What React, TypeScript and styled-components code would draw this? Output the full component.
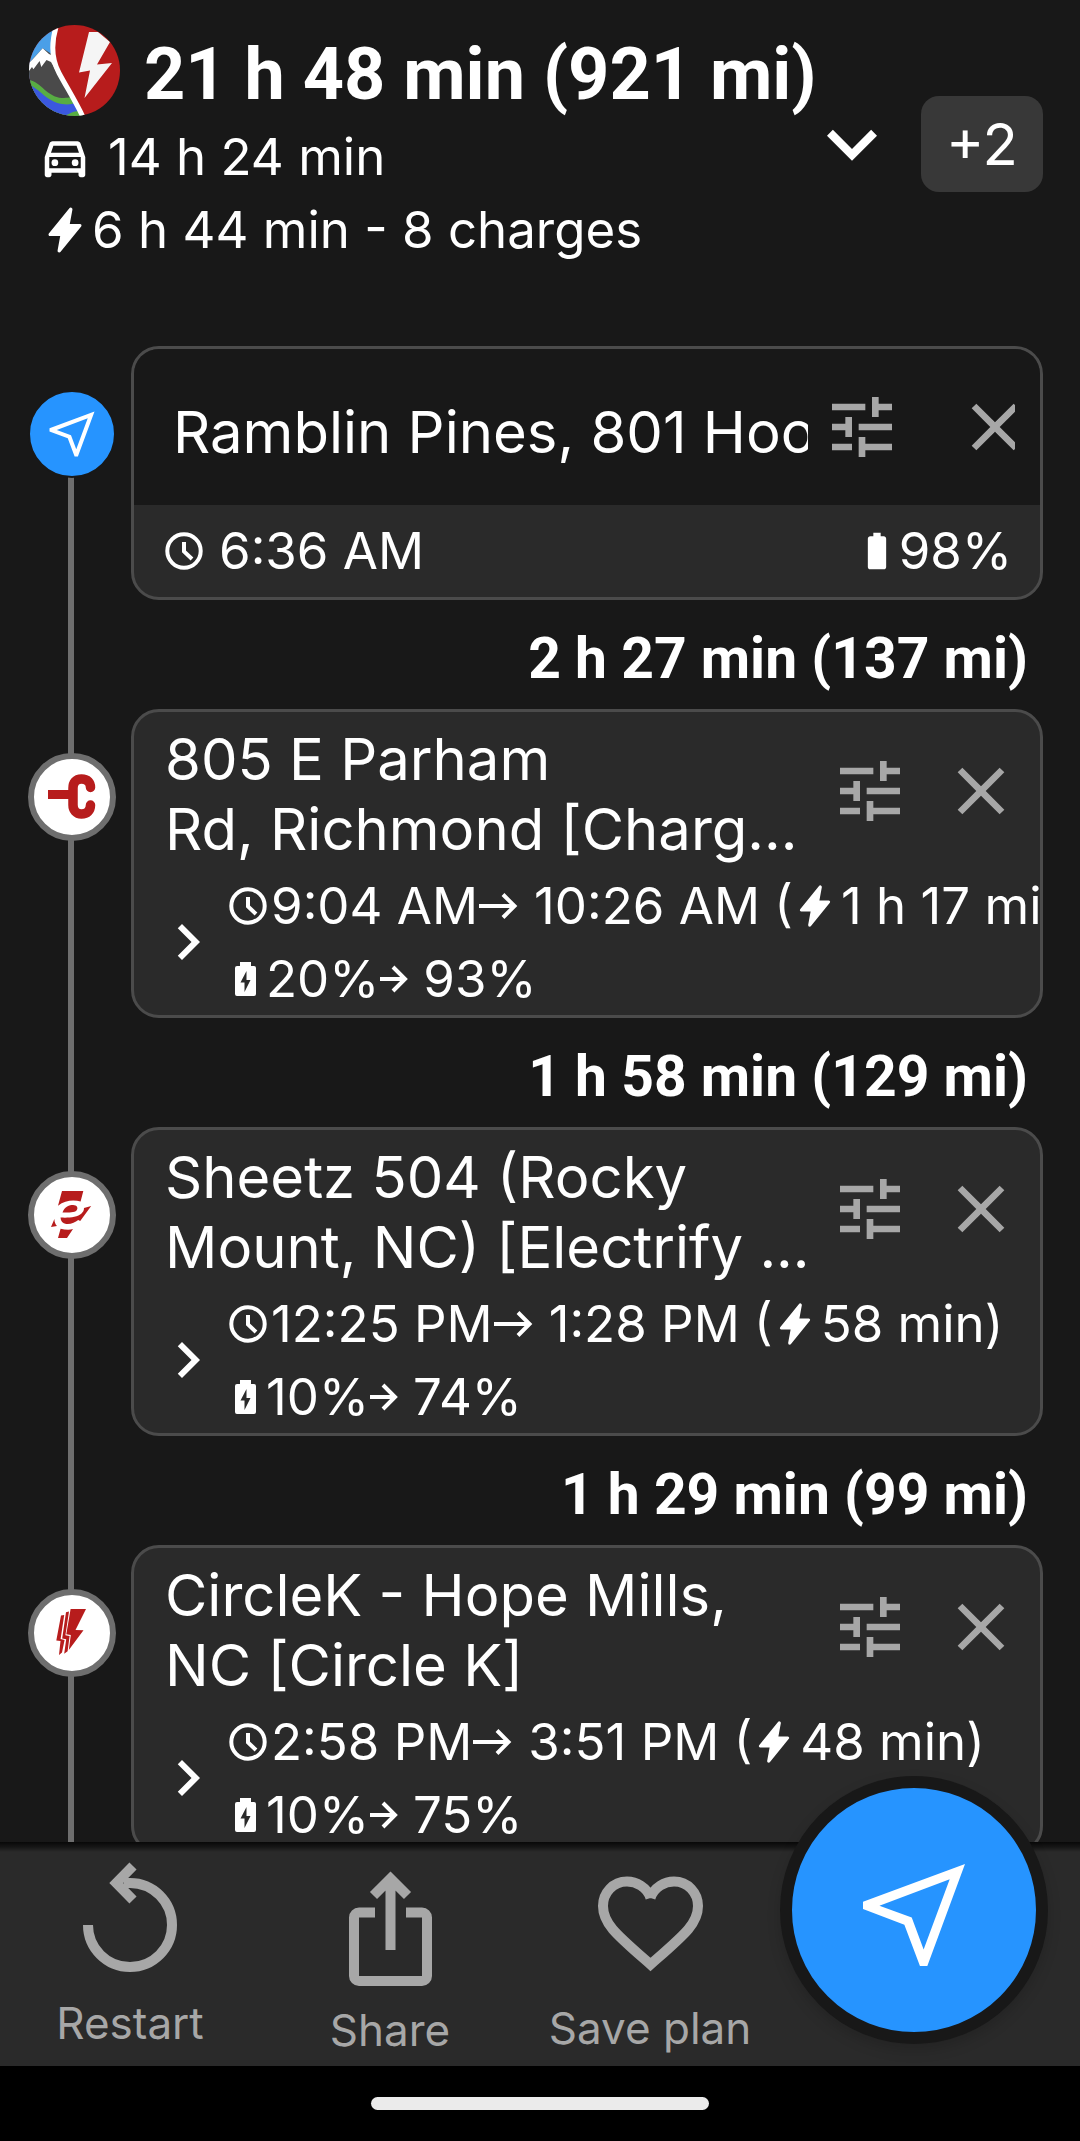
import React from 'react';
import styled, { createGlobalStyle } from 'styled-components';
import {
  MdBatteryFull,
  MdChevronRight,
  MdClose,
  MdExpandMore,
  MdOutlineDirectionsCar,
  MdTune,
} from 'react-icons/md';
import { IoFlash } from 'react-icons/io5';

const RED = '#b71c1c';

const STOPS = [
  {
    name: ['805 E Parham', 'Rd, Richmond [Charg...'],
    arrival: '9:04 AM',
    departure: '10:26 AM',
    duration: '1 h 17 min',
    from: '20%',
    to: '93%',
    leg: '1 h 58 min (129 mi)',
    logo: <ChargePointLogo />,
  },
  {
    name: ['Sheetz 504 (Rocky', 'Mount, NC) [Electrify ...'],
    arrival: '12:25 PM',
    departure: '1:28 PM',
    duration: '58 min',
    from: '10%',
    to: '74%',
    leg: '1 h 29 min (99 mi)',
    logo: <ElectrifyLogo />,
  },
  {
    name: ['CircleK - Hope Mills,', 'NC [Circle K]'],
    arrival: '2:58 PM',
    departure: '3:51 PM',
    duration: '48 min',
    from: '10%',
    to: '75%',
    leg: '',
    logo: <CircleKLogo />,
  },
];

function App() {
  return (
    <Screen>
      <GlobalStyle />
      <Header>
        <Summary>
          <TitleRow>
            <AppLogo />
            <Title>21 h 48 min (921 mi)</Title>
          </TitleRow>
          <SummaryLine $gap={16}>
            <SummaryIcon>
              <MdOutlineDirectionsCar size={54} />
            </SummaryIcon>
            14 h 24 min
          </SummaryLine>
          <SummaryLine $gap={0}>
            <SummaryIcon>
              <IoFlash size={48} />
            </SummaryIcon>
            6 h 44 min - 8 charges
          </SummaryLine>
        </Summary>
        <IconButton aria-label="Show details" $light>
          <MdExpandMore size={100} />
        </IconButton>
        <MoreButton>+2</MoreButton>
      </Header>

      <Plan>
        <Stop>
          <Rail $first>
            <Marker $current>
              <NavigateIcon size={60} />
            </Marker>
          </Rail>
          <div>
            <Card>
              <SearchRow>
                <SearchInput aria-label="Start" defaultValue="Ramblin Pines, 801 Hoo" />
                <IconButton aria-label="Start settings">
                  <MdTune size={80} />
                </IconButton>
                <CutButton aria-label="Clear start">
                  <MdClose size={80} />
                </CutButton>
              </SearchRow>
              <StartInfo>
                <InfoGroup $gap={16}>
                  <Clock />
                  6:36 AM
                </InfoGroup>
                <InfoGroup $gap={0}>
                  <MdBatteryFull size={44} />
                  98%
                </InfoGroup>
              </StartInfo>
            </Card>
            <Leg>2 h 27 min (137 mi)</Leg>
          </div>
        </Stop>

        {STOPS.map((stop) => (
          <Stop key={stop.arrival}>
            <Rail>
              <Marker>{stop.logo}</Marker>
            </Rail>
            <div>
              <Card>
                <StopHead>
                  <StopName>
                    {stop.name.map((line) => (
                      <span key={line}>{line}</span>
                    ))}
                  </StopName>
                  <IconButton aria-label="Stop settings">
                    <MdTune size={80} />
                  </IconButton>
                  <IconButton aria-label="Remove stop">
                    <MdClose size={80} />
                  </IconButton>
                </StopHead>
                <StopDetails>
                  <IconButton aria-label="Expand stop" $light>
                    <MdChevronRight size={72} />
                  </IconButton>
                  <div>
                    <DetailLine>
                      <Clock />
                      <span>{stop.arrival}</span>
                      <LongArrow />
                      <span>{stop.departure} (</span>
                      <IoFlash size={44} />
                      <span>{stop.duration})</span>
                    </DetailLine>
                    <DetailLine>
                      <ChargingBattery />
                      <span>{stop.from}</span>
                      <ShortArrow />
                      <span>{stop.to}</span>
                    </DetailLine>
                  </div>
                </StopDetails>
              </Card>
              <Leg>{stop.leg}</Leg>
            </div>
          </Stop>
        ))}
      </Plan>

      <BottomBar>
        <Tab>
          <RestartIcon />
          Restart
        </Tab>
        <Tab>
          <ShareIcon />
          Share
        </Tab>
        <Tab>
          <HeartIcon />
          Save plan
        </Tab>
        <DriveButton aria-label="Drive">
          <NavigateIcon size={136} />
        </DriveButton>
      </BottomBar>
      <SystemBar>
        <HomeIndicator />
      </SystemBar>
    </Screen>
  );
}

export default App;

function AppLogo() {
  return (
    <svg width="91" height="91" viewBox="0 0 91 91">
      <clipPath id="logo-clip">
        <circle cx="45.5" cy="45.5" r="45.5" />
      </clipPath>
      <g clipPath="url(#logo-clip)">
        <rect width="91" height="91" fill={RED} />
        <path d="M0 0h27c-5 16-5 34 3 47 8 15 17 28 25 44H0z" fill="#4a9fe8" />
        <path d="M0 38L13.7 23.3 24 30 53 91H0z" fill="#4a4a4a" />
        <path
          d="M0 38L4 34 13.7 23.3 20 29l6 3 1 14-5-9-4.500-2-5.200 7-1.700-6-6.200 8.300L3 42l-3 4z"
          fill="#fff"
        />
        <path d="M0 55c12 2 18 17 33 18 6 0 9-1 12-2l10 20H0z" fill="#58ad43" />
        <path d="M0 60c10 3 18 17 33 19 6 1 10 0 13-1l4 8c-8 0-10 5-20 5H0z" fill="#3b58df" />
        <path d="M27 2c-5 17-4 33 3 46 8 15 16 27 24 44" fill="none" stroke="#fff" strokeWidth="5" />
        <path
          d="M60 7h9l12 10-13 22.500L83 38 55.500 73l5.500-27.500-11 2z"
          fill="#f5f5f5"
        />
      </g>
    </svg>
  );
}

function NavigateIcon({ size }: { size: number }) {
  return (
    <svg width={size} height={size} viewBox="0 0 24 24">
      <path
        fill="#fff"
        fillRule="evenodd"
        d="M21 3L3 9.650v1.300l7.300 2.750L13.050 21h1.300zM18.300 5.700L13.700 18.100l-2.100-5.650-5.700-2.100z"
      />
    </svg>
  );
}

function ChargePointLogo() {
  return (
    <svg width="76" height="76" viewBox="0 0 76 76">
      <path d="M14 31h22v9H14z" fill={RED} />
      <path
        d="M56.500 28.500c0-5-3-8.500-9-8.500s-8.500 4-8.500 9v17c0 5 3 9 8.500 9s9-3.500 9-9"
        fill="none"
        stroke={RED}
        strokeWidth="9.500"
        strokeLinecap="round"
      />
    </svg>
  );
}

function ElectrifyLogo() {
  return (
    <svg width="76" height="76" viewBox="0 0 76 76" fill={RED}>
      <path d="M28 14h21.300l-2.700 10.500C40 22.500 31 23 24 28.700z" />
      <path d="M28.500 35.500c2-6 7-7.500 10.500-7.500 4 0 5.500 3 3.500 5.500-2 2-7 2-14 2z" />
      <path d="M26.500 40.500c7 .5 17 0 21-4 1.500-1.500 2.500-3 2.500-5.500l7.200-2-11 15-2-1c-3 2-7 4.500-12 4-3.500-.5-5.500-3-5.700-6.500z" />
      <path d="M20.400 42c0 3 1 5.500 2.600 7l-6 1z" />
      <path d="M26.600 51.700c4 1 9 1.500 12.400.3L33 61h-9z" />
    </svg>
  );
}

function CircleKLogo() {
  return (
    <svg width="76" height="76" viewBox="0 0 76 76" fill={RED}>
      <path d="M36.600 14H52L41.500 35l8 .3L34.800 55l2-15-4.500-.8z" />
      <path d="M32 17.300l3-.7-3.600 23.600 4.200.8-2 15.300-3.400 2.400 2-14.500-4-.6z" />
      <path d="M27 20.500l3.200-.4-3.600 24 4 .8L28 57.500 25 60l1.500-14-4.200-.5z" />
    </svg>
  );
}

function Clock() {
  return (
    <svg width="38" height="38" viewBox="0 0 38 38" fill="none" stroke="#fff" strokeWidth="4">
      <circle cx="19" cy="19" r="16.700" />
      <path d="M19 10v9.500l8 7.500" />
    </svg>
  );
}

function ChargingBattery() {
  return (
    <svg width="33" height="36" viewBox="0 0 33 36">
      <path
        fill="#fff"
        fillRule="evenodd"
        d="M11 1h11v4h3a2 2 0 0 1 2 2v26a2 2 0 0 1-2 2H8a2 2 0 0 1-2-2V7a2 2 0 0 1 2-2h3zM17.500 10L11.500 21.500h4V31l6-12h-4z"
      />
    </svg>
  );
}

function LongArrow() {
  return (
    <ArrowSvg width="52" height="28" viewBox="0 0 52 28">
      <path d="M1 14h35M25 2.500L36.500 14 25 25.500" />
    </ArrowSvg>
  );
}

function ShortArrow() {
  return (
    <ArrowSvg width="40" height="28" viewBox="0 0 40 28">
      <path d="M1 14h24M14 2l12 12-12 12" />
    </ArrowSvg>
  );
}

function RestartIcon() {
  return (
    <TabSvg width="138" height="138" viewBox="0 0 138 138">
      <path d="M27 68a42 42 0 1 0 42-42h-6" />
      <path d="M72 9L55.300 26 72 43" />
    </TabSvg>
  );
}

function ShareIcon() {
  return (
    <TabSvg width="152" height="152" viewBox="0 0 152 152">
      <path d="M61 62.500H45a5 5 0 0 0-5 5V126a5 5 0 0 0 5 5h63a5 5 0 0 0 5-5V67.500a5 5 0 0 0-5-5H92" />
      <path d="M76.500 100V30M59.500 45.500l17-17 17 17" />
    </TabSvg>
  );
}

function HeartIcon() {
  return (
    <TabSvg width="148" height="148" viewBox="0 0 148 148">
      <path d="M74.500 46C71 35 60 29.500 51 29.500 37 29.500 27 41 27 54c0 18 14 29 47.500 58.500C108 83 122 72 122 54c0-13-10-24.500-24-24.500-9 0-20 5.500-23.500 16.500" />
    </TabSvg>
  );
}

const GlobalStyle = createGlobalStyle`
  *, *::before, *::after {
    box-sizing: border-box;
  }
  body {
    margin: 0;
    background: #000;
  }
  button, input {
    margin: 0;
    padding: 0;
    border: 0;
    background: none;
    color: inherit;
    font: inherit;
  }
  svg {
    display: block;
    flex-shrink: 0;
  }
`;

const Screen = styled.div`
  height: 100vh;
  display: flex;
  flex-direction: column;
  overflow: hidden;
  background: #181818;
  color: #fff;
  font-family: Inter, sans-serif;
  font-size: 51px;
`;

const Header = styled.header`
  display: flex;
  align-items: center;
  padding: 25px 37px 0 29px;
`;

const Summary = styled.div`
  flex: 1;
  min-width: 0;
  display: flex;
  flex-direction: column;
  gap: 9px;
  white-space: nowrap;
`;

const TitleRow = styled.div`
  display: flex;
  gap: 24px;
  margin-bottom: -9px;
`;

const Title = styled.h1`
  margin: 0;
  font-family: Roboto, sans-serif;
  font-size: 72px;
  font-weight: 700;
  line-height: 100px;
`;

const SummaryLine = styled.div<{ $gap: number }>`
  display: flex;
  align-items: center;
  gap: ${({ $gap }) => $gap}px;
  padding-left: 9px;
  line-height: 64px;
`;

const SummaryIcon = styled.span`
  display: flex;
  justify-content: center;
  width: 54px;
`;

const IconButton = styled.button<{ $light?: boolean }>`
  flex-shrink: 0;
  color: ${({ $light }) => ($light ? '#fff' : '#a7a7a7')};
`;

const CutButton = styled(IconButton)`
  width: 60px;
  margin-left: 53px;
  overflow: hidden;
`;

const MoreButton = styled.button`
  width: 122px;
  height: 96px;
  margin-left: 19px;
  border-radius: 18px;
  background: #383838;
  font-size: 58px;
`;

const Plan = styled.main`
  flex: 1;
  min-height: 0;
  overflow: hidden;
  padding-top: 84px;
`;

const Stop = styled.section`
  display: grid;
  grid-template-columns: 88px minmax(0, 1fr);
  column-gap: 15px;
  padding: 0 37px 0 28px;
`;

const Rail = styled.div<{ $first?: boolean }>`
  position: relative;
  padding-top: 44px;

  &::before {
    content: '';
    position: absolute;
    top: ${({ $first }) => ($first ? '88px' : '0')};
    bottom: 0;
    left: 40px;
    width: 6px;
    background: #6e6e6e;
  }
`;

const Marker = styled.div<{ $current?: boolean }>`
  position: relative;
  display: flex;
  align-items: center;
  justify-content: center;
  width: 88px;
  height: 88px;
  border: ${({ $current }) => ($current ? '2px solid #181818' : '6px solid #6e6e6e')};
  border-radius: 50%;
  background: ${({ $current }) => ($current ? '#2694ff' : '#fff')};
`;

const Card = styled.article`
  overflow: hidden;
  border: 3px solid #4b4b4b;
  border-radius: 28px;
  background: #2a2a2a;
`;

const SearchRow = styled.div`
  display: flex;
  align-items: center;
  height: 156px;
  padding: 0 25px 0 39px;
  background: #181818;
`;

const SearchInput = styled.input`
  flex: 1;
  min-width: 0;
  margin-right: 14px;
  padding-top: 10px;
  outline: none;
  font-size: 58px;
`;

const StartInfo = styled.div`
  display: flex;
  justify-content: space-between;
  padding: 0 28px 0 31px;
  line-height: 92px;
`;

const InfoGroup = styled.div<{ $gap: number }>`
  display: flex;
  align-items: center;
  gap: ${({ $gap }) => $gap}px;
`;

const Leg = styled.div`
  height: 109px;
  padding-right: 15px;
  font-family: Roboto, sans-serif;
  font-size: 57px;
  font-weight: 700;
  line-height: 118px;
  text-align: right;
`;

const StopHead = styled.div`
  display: flex;
  align-items: center;
  gap: 31px;
  padding-right: 19px;
`;

const StopName = styled.h2`
  flex: 1;
  min-width: 0;
  display: flex;
  flex-direction: column;
  margin: 0;
  padding: 12px 0 5px 31px;
  font-size: 58px;
  font-weight: 400;
  line-height: 70px;
  white-space: nowrap;
`;

const StopDetails = styled.div`
  display: flex;
  align-items: center;
  gap: 5px;
  padding-left: 18px;
`;

const DetailLine = styled.div`
  display: flex;
  align-items: center;
  line-height: 73px;
  white-space: nowrap;

  svg + span {
    margin-left: 4px;
  }
`;

const ArrowSvg = styled.svg`
  fill: none;
  stroke: #fff;
  stroke-width: 4px;
`;

const BottomBar = styled.nav`
  position: relative;
  display: grid;
  grid-template-columns: repeat(3, 1fr) 300px;
  height: 224px;
  background: linear-gradient(#080808, #161616 5px, #2a2a2a 10px);
`;

const Tab = styled.button`
  display: flex;
  flex-direction: column;
  align-items: center;
  justify-content: center;
  color: #a7a7a7;
  font-size: 44px;
  line-height: 56px;
`;

const TabSvg = styled.svg`
  fill: none;
  stroke: currentColor;
  stroke-width: 10px;
  stroke-miterlimit: 10;
`;

const DriveButton = styled.button`
  position: absolute;
  top: -66px;
  right: 32px;
  display: flex;
  align-items: center;
  justify-content: center;
  width: 268px;
  height: 268px;
  padding-top: 10px;
  border: 12px solid #181818;
  border-radius: 50%;
  background: #2694ff;
  box-shadow: 0 6px 14px rgba(0, 0, 0, 0.16);
`;

const SystemBar = styled.footer`
  display: flex;
  justify-content: center;
  height: 75px;
  padding-top: 31px;
  background: #000;
`;

const HomeIndicator = styled.div`
  width: 338px;
  height: 13px;
  border-radius: 7px;
  background: #ebebeb;
`;
